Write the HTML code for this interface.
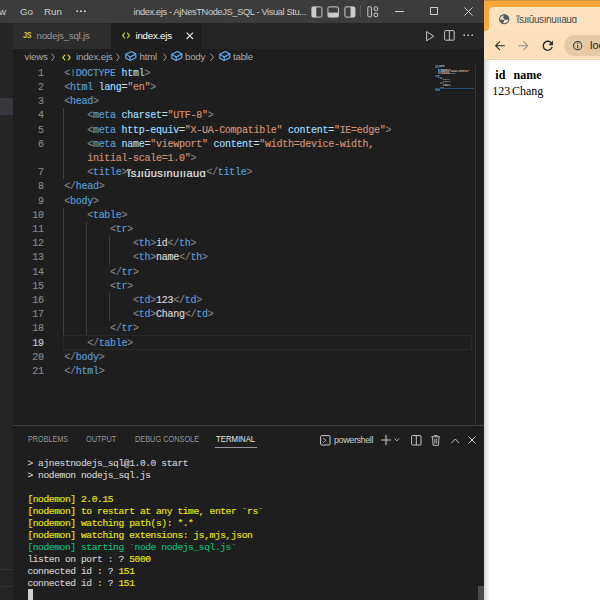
<!DOCTYPE html>
<html><head><meta charset="utf-8">
<style>
*{margin:0;padding:0;box-sizing:border-box}
html,body{width:600px;height:600px;overflow:hidden;background:#1e1e1e;font-family:"Liberation Sans",sans-serif;position:relative}
.a{position:absolute}
svg{position:absolute;overflow:visible}
#title{left:0;top:0;width:484px;height:22.5px;background:#3c3c3c;color:#cccccc;font-size:9.75px}
#title span{position:absolute;top:0.8px;line-height:22px;white-space:pre}
#side{left:0;top:22.5px;width:12.5px;height:577.5px;background:#252526}
#tabs{left:12.5px;top:22.5px;width:471.5px;height:26px;background:#252526}
.tab{top:0;height:26px;font-size:9.75px;line-height:26.5px;color:#969696;white-space:pre}
.tab span{position:absolute;top:0}
#crumbs{left:12.5px;top:48.5px;width:471.5px;height:17px;font-size:9.75px;line-height:15.6px;color:#a9a9a9;white-space:pre}
#crumbs span{position:absolute;top:0}
.mono{font-family:"Liberation Mono",monospace}
#code{left:0;top:65.6px;width:472px;height:360px;font-size:10px;letter-spacing:-0.265px;-webkit-text-stroke:0.18px currentColor}
.row{position:absolute;height:14.2px;line-height:14.2px;white-space:pre;padding-top:1.2px}
.ln{left:12px;width:32px;text-align:right;color:#858585;letter-spacing:-0.1px}
.t{left:64.2px;color:#d4d4d4}
.b{color:#808080}.n{color:#569cd6}.at{color:#9cdcfe}.s{color:#ce9178}.w{color:#d4d4d4}
.guide{position:absolute;width:1px;background:#404040}
#panel{left:12.5px;top:424.5px;width:471.5px;height:175.5px;background:#1e1e1e;border-top:1px solid #3f3f3f}
.ptab{position:absolute;top:8.7px;font-size:8.6px;line-height:10px;color:#969696;white-space:pre;transform-origin:left center}
#term{left:27.4px;top:458px;font-size:9.6px;letter-spacing:-0.4px;color:#cccccc;-webkit-text-stroke:0.15px currentColor}
.tr{position:absolute;left:0;height:12px;line-height:12px;white-space:pre}
.y{color:#e5e510}.g{color:#0dbc79}.d{color:#cccccc}
#browser{left:484px;top:0;width:116px;height:600px;background:#ffffff;overflow:hidden}
</style></head><body>
<div id="title" class="a">
  <span style="left:-1px">w</span>
  <span style="left:20px">Go</span>
  <span style="left:44px">Run</span>
  <svg style="left:75.5px;top:10px" width="10" height="3" viewBox="0 0 10 3"><circle cx="1.2" cy="1.3" r="1" fill="#d0d0d0"/><circle cx="5" cy="1.3" r="1" fill="#d0d0d0"/><circle cx="8.8" cy="1.3" r="1" fill="#d0d0d0"/></svg>
  <span style="left:133.5px;font-size:9.3px;letter-spacing:-0.38px">index.ejs - AjNesTNodeJS_SQL - Visual Stu...</span>
  <svg style="left:310.5px;top:5.5px" width="12" height="12" viewBox="0 0 12 12"><rect x="0.9" y="0.9" width="10" height="10.2" rx="1.2" fill="none" stroke="#cccccc" stroke-width="1"/><rect x="1" y="1" width="4.3" height="10" fill="#cccccc"/></svg><svg style="left:326.5px;top:5.5px" width="12" height="12" viewBox="0 0 12 12"><rect x="0.9" y="0.9" width="10.5" height="10.2" rx="1.2" fill="none" stroke="#cccccc" stroke-width="1"/><rect x="1" y="6.6" width="10.4" height="4.4" fill="#cccccc"/></svg><svg style="left:343.5px;top:5.5px" width="12" height="12" viewBox="0 0 12 12"><rect x="0.9" y="0.9" width="10" height="10.2" rx="1.2" fill="none" stroke="#cccccc" stroke-width="1"/><rect x="6.6" y="1" width="4.3" height="10" fill="#cccccc"/></svg><div class="a" style="left:360px;top:5px;width:1px;height:12px;background:#5a5a5a"></div><svg style="left:367px;top:5.5px" width="12" height="12" viewBox="0 0 12 12"><rect x="0.8" y="0.8" width="3.6" height="10" rx="0.8" fill="none" stroke="#cccccc" stroke-width="1"/><rect x="7.2" y="0.8" width="3.4" height="3.6" rx="0.8" fill="none" stroke="#cccccc" stroke-width="1"/><rect x="7.2" y="7" width="3.4" height="3.6" rx="0.8" fill="none" stroke="#cccccc" stroke-width="1"/></svg><div class="a" style="left:395px;top:10.6px;width:9px;height:1px;background:#cccccc"></div><div class="a" style="left:429.5px;top:7px;width:8.2px;height:8px;border:1px solid #cccccc;border-radius:0.5px"></div><svg style="left:463.5px;top:6.8px" width="9" height="9" viewBox="0 0 9 9"><path d="M0.5 0.5L8.5 8.5M8.5 0.5L0.5 8.5" stroke="#cccccc" stroke-width="1"/></svg>
</div>
<div id="side" class="a">
  <div class="a" style="left:0;top:75.5px;width:12.5px;height:16.5px;background:#37373d"></div>
  <div class="a" style="left:0;top:546.5px;width:12.5px;height:1px;background:#333335"></div>
  <div class="a" style="left:0;top:563px;width:12.5px;height:1px;background:#333335"></div>
</div>
<div id="tabs" class="a">
  <div class="a tab" style="left:0;width:98px;background:#2d2d2d"><span style="color:#cbcb41;font-weight:bold;font-size:8.8px;left:10.3px;top:-0.5px;letter-spacing:-0.4px;display:inline-block;transform:scaleX(0.82);transform-origin:left">JS</span><span style="left:24px;letter-spacing:-0.26px">nodejs_sql.js</span></div>
  <div class="a tab" style="left:98px;width:90px;background:#1e1e1e;color:#ffffff"><svg style="left:11.3px;top:9.8px" width="9" height="7" viewBox="0 0 9 7"><path d="M2.9 0.6L0.7 3.5L2.9 6.4M5.2 0.6L7.4 3.5L5.2 6.4" fill="none" stroke="#cbcb41" stroke-width="1.2"/></svg><span style="left:25px;letter-spacing:-0.24px">index.ejs</span><svg style="left:75.6px;top:9.4px" width="8" height="8" viewBox="0 0 8 8"><path d="M0.6 0.6L7 7M7 0.6L0.6 7" stroke="#dcdcdc" stroke-width="1.2"/></svg></div>
  <svg style="left:413px;top:8px" width="9" height="11" viewBox="0 0 9 11"><path d="M0.6 0.6L7.8 5.2L0.6 9.8Z" fill="none" stroke="#c5c5c5" stroke-width="1" stroke-linejoin="round"/></svg><svg style="left:431.5px;top:7px" width="11" height="11" viewBox="0 0 11 11"><rect x="0.6" y="0.6" width="9.6" height="9.6" rx="0.8" fill="none" stroke="#c5c5c5" stroke-width="1"/><path d="M5.4 0.6V10.2" stroke="#c5c5c5" stroke-width="1"/></svg><svg style="left:450.5px;top:11px" width="11" height="3" viewBox="0 0 11 3"><circle cx="1.2" cy="1.2" r="0.85" fill="#c5c5c5"/><circle cx="5.2" cy="1.2" r="0.85" fill="#c5c5c5"/><circle cx="9.2" cy="1.2" r="0.85" fill="#c5c5c5"/></svg>
</div>
<div id="crumbs" class="a">
  <span style="left:12px;letter-spacing:-0.25px">views</span>
  <svg style="left:38.7px;top:4.2px" width="4" height="9" viewBox="0 0 4 9"><path d="M0.5 0.5L3.3 4.2L0.5 7.9" fill="none" stroke="#a9a9a9" stroke-width="0.9"/></svg><svg style="left:49.8px;top:5.2px" width="9" height="7" viewBox="0 0 9 7"><path d="M3.2 0.6L0.8 3.5L3.2 6.4M5.8 0.6L8.2 3.5L5.8 6.4" fill="none" stroke="#cbcb41" stroke-width="1.2"/></svg><span style="left:63.5px;letter-spacing:-0.22px">index.ejs</span><svg style="left:103.8px;top:4.2px" width="4" height="9" viewBox="0 0 4 9"><path d="M0.5 0.5L3.3 4.2L0.5 7.9" fill="none" stroke="#a9a9a9" stroke-width="0.9"/></svg><svg style="left:112.3px;top:2.5px" width="12" height="11" viewBox="0 0 12 11"><path d="M0.8 3.3L6.5 0.5L10.8 3L10.8 6.7L5.2 9.4L0.8 7.3Z" fill="none" stroke="#62aef5" stroke-width="1.15" stroke-linejoin="round"/><path d="M0.8 3.3L5.2 6L10.8 3M5.2 6V9.4" fill="none" stroke="#62aef5" stroke-width="1.15"/></svg><span style="left:127.0px;letter-spacing:-0.25px">html</span><svg style="left:150.5px;top:4.2px" width="4" height="9" viewBox="0 0 4 9"><path d="M0.5 0.5L3.3 4.2L0.5 7.9" fill="none" stroke="#a9a9a9" stroke-width="0.9"/></svg><svg style="left:158.1px;top:2.5px" width="12" height="11" viewBox="0 0 12 11"><path d="M0.8 3.3L6.5 0.5L10.8 3L10.8 6.7L5.2 9.4L0.8 7.3Z" fill="none" stroke="#62aef5" stroke-width="1.15" stroke-linejoin="round"/><path d="M0.8 3.3L5.2 6L10.8 3M5.2 6V9.4" fill="none" stroke="#62aef5" stroke-width="1.15"/></svg><span style="left:172.5px;letter-spacing:-0.25px">body</span><svg style="left:197.9px;top:4.2px" width="4" height="9" viewBox="0 0 4 9"><path d="M0.5 0.5L3.3 4.2L0.5 7.9" fill="none" stroke="#a9a9a9" stroke-width="0.9"/></svg><svg style="left:206.1px;top:2.5px" width="12" height="11" viewBox="0 0 12 11"><path d="M0.8 3.3L6.5 0.5L10.8 3L10.8 6.7L5.2 9.4L0.8 7.3Z" fill="none" stroke="#62aef5" stroke-width="1.15" stroke-linejoin="round"/><path d="M0.8 3.3L5.2 6L10.8 3M5.2 6V9.4" fill="none" stroke="#62aef5" stroke-width="1.15"/></svg><span style="left:220.5px;letter-spacing:-0.25px">table</span>
</div>
<div id="code" class="a mono">
<div class="a" style="left:63.2px;top:269.80px;width:409px;height:14.20px;border:1px solid #282828"></div>
<div class="guide" style="left:63.2px;top:42.60px;height:71.00px;background:#404040"></div>
<div class="guide" style="left:63.2px;top:142.00px;height:127.80px;background:#404040"></div>
<div class="guide" style="left:86.1px;top:156.20px;height:113.60px;background:#404040"></div>
<div class="guide" style="left:109.1px;top:170.40px;height:28.40px;background:#404040"></div>
<div class="guide" style="left:109.1px;top:227.20px;height:28.40px;background:#404040"></div>
<div class="row ln" style="top:0.00px;color:#858585">1</div>
<div class="row t" style="top:0.00px"><span class="b">&lt;!</span><span class="n">DOCTYPE</span><span class="w"> </span><span class="at">html</span><span class="b">&gt;</span></div>
<div class="row ln" style="top:14.20px;color:#858585">2</div>
<div class="row t" style="top:14.20px"><span class="b">&lt;</span><span class="n">html</span><span class="w"> </span><span class="at">lang</span><span class="w">=</span><span class="s">"en"</span><span class="b">&gt;</span></div>
<div class="row ln" style="top:28.40px;color:#858585">3</div>
<div class="row t" style="top:28.40px"><span class="b">&lt;</span><span class="n">head</span><span class="b">&gt;</span></div>
<div class="row ln" style="top:42.60px;color:#858585">4</div>
<div class="row t" style="top:42.60px"><span class="w">    </span><span class="b">&lt;</span><span class="n">meta</span><span class="w"> </span><span class="at">charset</span><span class="w">=</span><span class="s">"UTF-8"</span><span class="b">&gt;</span></div>
<div class="row ln" style="top:56.80px;color:#858585">5</div>
<div class="row t" style="top:56.80px"><span class="w">    </span><span class="b">&lt;</span><span class="n">meta</span><span class="w"> </span><span class="at">http-equiv</span><span class="w">=</span><span class="s">"X-UA-Compatible"</span><span class="w"> </span><span class="at">content</span><span class="w">=</span><span class="s">"IE=edge"</span><span class="b">&gt;</span></div>
<div class="row ln" style="top:71.00px;color:#858585">6</div>
<div class="row t" style="top:71.00px"><span class="w">    </span><span class="b">&lt;</span><span class="n">meta</span><span class="w"> </span><span class="at">name</span><span class="w">=</span><span class="s">"viewport"</span><span class="w"> </span><span class="at">content</span><span class="w">=</span><span class="s">"width=device-width,</span></div>
<div class="row t" style="top:85.20px"><span class="w">    </span><span class="s">initial-scale=1.0"</span><span class="b">&gt;</span></div>
<div class="row ln" style="top:99.40px;color:#858585">7</div>
<div class="row t" style="top:99.40px"><span class="w">    </span><span class="b">&lt;</span><span class="n">title</span><span class="b">&gt;</span><span style="display:inline-block;width:79px;font-family:'Liberation Sans',sans-serif;font-size:11px;letter-spacing:0.4px;color:#e8e8e8;vertical-align:top;overflow:hidden">ĩsɹıūusınuııauɑ</span><span class="b">&lt;/</span><span class="n">title</span><span class="b">&gt;</span></div>
<div class="row ln" style="top:113.60px;color:#858585">8</div>
<div class="row t" style="top:113.60px"><span class="b">&lt;/</span><span class="n">head</span><span class="b">&gt;</span></div>
<div class="row ln" style="top:127.80px;color:#858585">9</div>
<div class="row t" style="top:127.80px"><span class="b">&lt;</span><span class="n">body</span><span class="b">&gt;</span></div>
<div class="row ln" style="top:142.00px;color:#858585">10</div>
<div class="row t" style="top:142.00px"><span class="w">    </span><span class="b">&lt;</span><span class="n">table</span><span class="b">&gt;</span></div>
<div class="row ln" style="top:156.20px;color:#858585">11</div>
<div class="row t" style="top:156.20px"><span class="w">        </span><span class="b">&lt;</span><span class="n">tr</span><span class="b">&gt;</span></div>
<div class="row ln" style="top:170.40px;color:#858585">12</div>
<div class="row t" style="top:170.40px"><span class="w">            </span><span class="b">&lt;</span><span class="n">th</span><span class="b">&gt;</span><span class="w">id</span><span class="b">&lt;/</span><span class="n">th</span><span class="b">&gt;</span></div>
<div class="row ln" style="top:184.60px;color:#858585">13</div>
<div class="row t" style="top:184.60px"><span class="w">            </span><span class="b">&lt;</span><span class="n">th</span><span class="b">&gt;</span><span class="w">name</span><span class="b">&lt;/</span><span class="n">th</span><span class="b">&gt;</span></div>
<div class="row ln" style="top:198.80px;color:#858585">14</div>
<div class="row t" style="top:198.80px"><span class="w">        </span><span class="b">&lt;/</span><span class="n">tr</span><span class="b">&gt;</span></div>
<div class="row ln" style="top:213.00px;color:#858585">15</div>
<div class="row t" style="top:213.00px"><span class="w">        </span><span class="b">&lt;</span><span class="n">tr</span><span class="b">&gt;</span></div>
<div class="row ln" style="top:227.20px;color:#858585">16</div>
<div class="row t" style="top:227.20px"><span class="w">            </span><span class="b">&lt;</span><span class="n">td</span><span class="b">&gt;</span><span class="w">123</span><span class="b">&lt;/</span><span class="n">td</span><span class="b">&gt;</span></div>
<div class="row ln" style="top:241.40px;color:#858585">17</div>
<div class="row t" style="top:241.40px"><span class="w">            </span><span class="b">&lt;</span><span class="n">td</span><span class="b">&gt;</span><span class="w">Chang</span><span class="b">&lt;/</span><span class="n">td</span><span class="b">&gt;</span></div>
<div class="row ln" style="top:255.60px;color:#858585">18</div>
<div class="row t" style="top:255.60px"><span class="w">        </span><span class="b">&lt;/</span><span class="n">tr</span><span class="b">&gt;</span></div>
<div class="row ln" style="top:269.80px;color:#c6c6c6">19</div>
<div class="row t" style="top:269.80px"><span class="w">    </span><span class="b">&lt;/</span><span class="n">table</span><span class="b">&gt;</span></div>
<div class="row ln" style="top:284.00px;color:#858585">20</div>
<div class="row t" style="top:284.00px"><span class="b">&lt;/</span><span class="n">body</span><span class="b">&gt;</span></div>
<div class="row ln" style="top:298.20px;color:#858585">21</div>
<div class="row t" style="top:298.20px"><span class="b">&lt;/</span><span class="n">html</span><span class="b">&gt;</span></div>
</div>
<div class="a" style="left:435.40px;top:65.00px;width:1.20px;height:1.1px;background:#808080;opacity:0.55"></div><div class="a" style="left:436.60px;top:65.00px;width:4.20px;height:1.1px;background:#569cd6;opacity:0.55"></div><div class="a" style="left:441.40px;top:65.00px;width:2.40px;height:1.1px;background:#9cdcfe;opacity:0.55"></div><div class="a" style="left:443.80px;top:65.00px;width:0.60px;height:1.1px;background:#808080;opacity:0.55"></div><div class="a" style="left:435.40px;top:66.20px;width:0.60px;height:1.1px;background:#808080;opacity:0.55"></div><div class="a" style="left:436.00px;top:66.20px;width:2.40px;height:1.1px;background:#569cd6;opacity:0.55"></div><div class="a" style="left:439.00px;top:66.20px;width:2.40px;height:1.1px;background:#9cdcfe;opacity:0.55"></div><div class="a" style="left:441.40px;top:66.20px;width:0.60px;height:1.1px;background:#d4d4d4;opacity:0.55"></div><div class="a" style="left:442.00px;top:66.20px;width:2.40px;height:1.1px;background:#ce9178;opacity:0.55"></div><div class="a" style="left:444.40px;top:66.20px;width:0.60px;height:1.1px;background:#808080;opacity:0.55"></div><div class="a" style="left:435.40px;top:67.40px;width:0.60px;height:1.1px;background:#808080;opacity:0.55"></div><div class="a" style="left:436.00px;top:67.40px;width:2.40px;height:1.1px;background:#569cd6;opacity:0.55"></div><div class="a" style="left:438.40px;top:67.40px;width:0.60px;height:1.1px;background:#808080;opacity:0.55"></div><div class="a" style="left:437.80px;top:68.60px;width:0.60px;height:1.1px;background:#808080;opacity:0.55"></div><div class="a" style="left:438.40px;top:68.60px;width:2.40px;height:1.1px;background:#569cd6;opacity:0.55"></div><div class="a" style="left:441.40px;top:68.60px;width:4.20px;height:1.1px;background:#9cdcfe;opacity:0.55"></div><div class="a" style="left:445.60px;top:68.60px;width:0.60px;height:1.1px;background:#d4d4d4;opacity:0.55"></div><div class="a" style="left:446.20px;top:68.60px;width:4.20px;height:1.1px;background:#ce9178;opacity:0.55"></div><div class="a" style="left:450.40px;top:68.60px;width:0.60px;height:1.1px;background:#808080;opacity:0.55"></div><div class="a" style="left:437.80px;top:69.80px;width:0.60px;height:1.1px;background:#808080;opacity:0.55"></div><div class="a" style="left:438.40px;top:69.80px;width:2.40px;height:1.1px;background:#569cd6;opacity:0.55"></div><div class="a" style="left:441.40px;top:69.80px;width:6.00px;height:1.1px;background:#9cdcfe;opacity:0.55"></div><div class="a" style="left:447.40px;top:69.80px;width:0.60px;height:1.1px;background:#d4d4d4;opacity:0.55"></div><div class="a" style="left:448.00px;top:69.80px;width:10.20px;height:1.1px;background:#ce9178;opacity:0.55"></div><div class="a" style="left:458.80px;top:69.80px;width:4.20px;height:1.1px;background:#9cdcfe;opacity:0.55"></div><div class="a" style="left:463.00px;top:69.80px;width:0.60px;height:1.1px;background:#d4d4d4;opacity:0.55"></div><div class="a" style="left:463.60px;top:69.80px;width:5.40px;height:1.1px;background:#ce9178;opacity:0.55"></div><div class="a" style="left:469.00px;top:69.80px;width:0.60px;height:1.1px;background:#808080;opacity:0.55"></div><div class="a" style="left:437.80px;top:71.00px;width:0.60px;height:1.1px;background:#808080;opacity:0.55"></div><div class="a" style="left:438.40px;top:71.00px;width:2.40px;height:1.1px;background:#569cd6;opacity:0.55"></div><div class="a" style="left:441.40px;top:71.00px;width:2.40px;height:1.1px;background:#9cdcfe;opacity:0.55"></div><div class="a" style="left:443.80px;top:71.00px;width:0.60px;height:1.1px;background:#d4d4d4;opacity:0.55"></div><div class="a" style="left:444.40px;top:71.00px;width:6.00px;height:1.1px;background:#ce9178;opacity:0.55"></div><div class="a" style="left:451.00px;top:71.00px;width:4.20px;height:1.1px;background:#9cdcfe;opacity:0.55"></div><div class="a" style="left:455.20px;top:71.00px;width:0.60px;height:1.1px;background:#d4d4d4;opacity:0.55"></div><div class="a" style="left:455.80px;top:71.00px;width:12.00px;height:1.1px;background:#ce9178;opacity:0.55"></div><div class="a" style="left:437.80px;top:72.20px;width:10.80px;height:1.1px;background:#ce9178;opacity:0.55"></div><div class="a" style="left:448.60px;top:72.20px;width:0.60px;height:1.1px;background:#808080;opacity:0.55"></div><div class="a" style="left:437.80px;top:73.40px;width:0.60px;height:1.1px;background:#808080;opacity:0.55"></div><div class="a" style="left:438.40px;top:73.40px;width:3.00px;height:1.1px;background:#569cd6;opacity:0.55"></div><div class="a" style="left:441.40px;top:73.40px;width:0.60px;height:1.1px;background:#808080;opacity:0.55"></div><div class="a" style="left:442.00px;top:73.40px;width:8.40px;height:1.1px;background:#d4d4d4;opacity:0.55"></div><div class="a" style="left:450.40px;top:73.40px;width:1.20px;height:1.1px;background:#808080;opacity:0.55"></div><div class="a" style="left:451.60px;top:73.40px;width:3.00px;height:1.1px;background:#569cd6;opacity:0.55"></div><div class="a" style="left:454.60px;top:73.40px;width:0.60px;height:1.1px;background:#808080;opacity:0.55"></div><div class="a" style="left:435.40px;top:74.60px;width:1.20px;height:1.1px;background:#808080;opacity:0.55"></div><div class="a" style="left:436.60px;top:74.60px;width:2.40px;height:1.1px;background:#569cd6;opacity:0.55"></div><div class="a" style="left:439.00px;top:74.60px;width:0.60px;height:1.1px;background:#808080;opacity:0.55"></div><div class="a" style="left:435.40px;top:75.80px;width:0.60px;height:1.1px;background:#808080;opacity:0.55"></div><div class="a" style="left:436.00px;top:75.80px;width:2.40px;height:1.1px;background:#569cd6;opacity:0.55"></div><div class="a" style="left:438.40px;top:75.80px;width:0.60px;height:1.1px;background:#808080;opacity:0.55"></div><div class="a" style="left:437.80px;top:77.00px;width:0.60px;height:1.1px;background:#808080;opacity:0.55"></div><div class="a" style="left:438.40px;top:77.00px;width:3.00px;height:1.1px;background:#569cd6;opacity:0.55"></div><div class="a" style="left:441.40px;top:77.00px;width:0.60px;height:1.1px;background:#808080;opacity:0.55"></div><div class="a" style="left:440.20px;top:78.20px;width:0.60px;height:1.1px;background:#808080;opacity:0.55"></div><div class="a" style="left:440.80px;top:78.20px;width:1.20px;height:1.1px;background:#569cd6;opacity:0.55"></div><div class="a" style="left:442.00px;top:78.20px;width:0.60px;height:1.1px;background:#808080;opacity:0.55"></div><div class="a" style="left:442.60px;top:79.40px;width:0.60px;height:1.1px;background:#808080;opacity:0.55"></div><div class="a" style="left:443.20px;top:79.40px;width:1.20px;height:1.1px;background:#569cd6;opacity:0.55"></div><div class="a" style="left:444.40px;top:79.40px;width:0.60px;height:1.1px;background:#808080;opacity:0.55"></div><div class="a" style="left:445.00px;top:79.40px;width:1.20px;height:1.1px;background:#d4d4d4;opacity:0.55"></div><div class="a" style="left:446.20px;top:79.40px;width:1.20px;height:1.1px;background:#808080;opacity:0.55"></div><div class="a" style="left:447.40px;top:79.40px;width:1.20px;height:1.1px;background:#569cd6;opacity:0.55"></div><div class="a" style="left:448.60px;top:79.40px;width:0.60px;height:1.1px;background:#808080;opacity:0.55"></div><div class="a" style="left:442.60px;top:80.60px;width:0.60px;height:1.1px;background:#808080;opacity:0.55"></div><div class="a" style="left:443.20px;top:80.60px;width:1.20px;height:1.1px;background:#569cd6;opacity:0.55"></div><div class="a" style="left:444.40px;top:80.60px;width:0.60px;height:1.1px;background:#808080;opacity:0.55"></div><div class="a" style="left:445.00px;top:80.60px;width:2.40px;height:1.1px;background:#d4d4d4;opacity:0.55"></div><div class="a" style="left:447.40px;top:80.60px;width:1.20px;height:1.1px;background:#808080;opacity:0.55"></div><div class="a" style="left:448.60px;top:80.60px;width:1.20px;height:1.1px;background:#569cd6;opacity:0.55"></div><div class="a" style="left:449.80px;top:80.60px;width:0.60px;height:1.1px;background:#808080;opacity:0.55"></div><div class="a" style="left:440.20px;top:81.80px;width:1.20px;height:1.1px;background:#808080;opacity:0.55"></div><div class="a" style="left:441.40px;top:81.80px;width:1.20px;height:1.1px;background:#569cd6;opacity:0.55"></div><div class="a" style="left:442.60px;top:81.80px;width:0.60px;height:1.1px;background:#808080;opacity:0.55"></div><div class="a" style="left:440.20px;top:83.00px;width:0.60px;height:1.1px;background:#808080;opacity:0.55"></div><div class="a" style="left:440.80px;top:83.00px;width:1.20px;height:1.1px;background:#569cd6;opacity:0.55"></div><div class="a" style="left:442.00px;top:83.00px;width:0.60px;height:1.1px;background:#808080;opacity:0.55"></div><div class="a" style="left:442.60px;top:84.20px;width:0.60px;height:1.1px;background:#808080;opacity:0.55"></div><div class="a" style="left:443.20px;top:84.20px;width:1.20px;height:1.1px;background:#569cd6;opacity:0.55"></div><div class="a" style="left:444.40px;top:84.20px;width:0.60px;height:1.1px;background:#808080;opacity:0.55"></div><div class="a" style="left:445.00px;top:84.20px;width:1.80px;height:1.1px;background:#d4d4d4;opacity:0.55"></div><div class="a" style="left:446.80px;top:84.20px;width:1.20px;height:1.1px;background:#808080;opacity:0.55"></div><div class="a" style="left:448.00px;top:84.20px;width:1.20px;height:1.1px;background:#569cd6;opacity:0.55"></div><div class="a" style="left:449.20px;top:84.20px;width:0.60px;height:1.1px;background:#808080;opacity:0.55"></div><div class="a" style="left:442.60px;top:85.40px;width:0.60px;height:1.1px;background:#808080;opacity:0.55"></div><div class="a" style="left:443.20px;top:85.40px;width:1.20px;height:1.1px;background:#569cd6;opacity:0.55"></div><div class="a" style="left:444.40px;top:85.40px;width:0.60px;height:1.1px;background:#808080;opacity:0.55"></div><div class="a" style="left:445.00px;top:85.40px;width:3.00px;height:1.1px;background:#d4d4d4;opacity:0.55"></div><div class="a" style="left:448.00px;top:85.40px;width:1.20px;height:1.1px;background:#808080;opacity:0.55"></div><div class="a" style="left:449.20px;top:85.40px;width:1.20px;height:1.1px;background:#569cd6;opacity:0.55"></div><div class="a" style="left:450.40px;top:85.40px;width:0.60px;height:1.1px;background:#808080;opacity:0.55"></div><div class="a" style="left:440.20px;top:86.60px;width:1.20px;height:1.1px;background:#808080;opacity:0.55"></div><div class="a" style="left:441.40px;top:86.60px;width:1.20px;height:1.1px;background:#569cd6;opacity:0.55"></div><div class="a" style="left:442.60px;top:86.60px;width:0.60px;height:1.1px;background:#808080;opacity:0.55"></div><div class="a" style="left:437.80px;top:87.80px;width:1.20px;height:1.1px;background:#808080;opacity:0.55"></div><div class="a" style="left:439.00px;top:87.80px;width:3.00px;height:1.1px;background:#569cd6;opacity:0.55"></div><div class="a" style="left:442.00px;top:87.80px;width:0.60px;height:1.1px;background:#808080;opacity:0.55"></div><div class="a" style="left:435.40px;top:89.00px;width:1.20px;height:1.1px;background:#808080;opacity:0.55"></div><div class="a" style="left:436.60px;top:89.00px;width:2.40px;height:1.1px;background:#569cd6;opacity:0.55"></div><div class="a" style="left:439.00px;top:89.00px;width:0.60px;height:1.1px;background:#808080;opacity:0.55"></div><div class="a" style="left:435.40px;top:90.20px;width:1.20px;height:1.1px;background:#808080;opacity:0.55"></div><div class="a" style="left:436.60px;top:90.20px;width:2.40px;height:1.1px;background:#569cd6;opacity:0.55"></div><div class="a" style="left:439.00px;top:90.20px;width:0.60px;height:1.1px;background:#808080;opacity:0.55"></div><div class="a" style="left:435.4px;top:87.9px;width:39px;height:1.2px;background:#264f78"></div><div class="a" style="left:475px;top:65px;width:1px;height:359.5px;background:#333333"></div>
<div id="panel" class="a">
  <span class="ptab" style="left:15px;transform:scaleX(0.84)">PROBLEMS</span>
  <span class="ptab" style="left:73.5px;transform:scaleX(0.86)">OUTPUT</span>
  <span class="ptab" style="left:122px;transform:scaleX(0.855)">DEBUG CONSOLE</span>
  <span class="ptab" style="left:203.5px;color:#e7e7e7;transform:scaleX(0.9)">TERMINAL</span>
  <div class="a" style="left:202.5px;top:21.6px;width:41.5px;height:1.2px;background:#959595"></div>
  <svg style="left:307.0px;top:9.5px" width="11" height="11" viewBox="0 0 11 11"><rect x="0.6" y="0.6" width="9.4" height="9.4" rx="1" fill="none" stroke="#c5c5c5" stroke-width="1"/><path d="M3.4 3L5.6 5.3L3.4 7.6" fill="none" stroke="#c5c5c5" stroke-width="1"/></svg><span class="a" style="left:321.5px;top:9px;font-size:9px;line-height:11px;color:#cccccc;letter-spacing:-0.4px">powershell</span><svg style="left:368.5px;top:9.5px" width="11" height="11" viewBox="0 0 11 11"><path d="M5 0V10M0 5H10" stroke="#c5c5c5" stroke-width="1.1"/></svg><svg style="left:381.0px;top:12.5px" width="6" height="4" viewBox="0 0 6 4"><path d="M0.5 0.5L2.8 2.8L5.1 0.5" fill="none" stroke="#c5c5c5" stroke-width="0.9"/></svg><svg style="left:398.5px;top:9.5px" width="11" height="11" viewBox="0 0 11 11"><rect x="0.6" y="0.6" width="9.4" height="9.4" rx="0.8" fill="none" stroke="#c5c5c5" stroke-width="1"/><path d="M5.3 0.6V10" stroke="#c5c5c5" stroke-width="1"/></svg><svg style="left:418.5px;top:9.2px" width="10" height="11" viewBox="0 0 10 11"><path d="M0.3 1.8H9.2M3.2 1.8V0.5H6.3V1.8M1.5 1.8L2 10.3H7.5L8 1.8M3.8 3.8V8.6M5.7 3.8V8.6" fill="none" stroke="#c5c5c5" stroke-width="0.9"/></svg><svg style="left:438.5px;top:12px" width="9" height="6" viewBox="0 0 9 6"><path d="M0.5 5L4.3 1L8.1 5" fill="none" stroke="#c5c5c5" stroke-width="1"/></svg><svg style="left:455.0px;top:10.5px" width="8" height="8" viewBox="0 0 8 8"><path d="M0.5 0.5L7.5 7.5M7.5 0.5L0.5 7.5" stroke="#c5c5c5" stroke-width="1"/></svg>
</div>
<div id="term" class="a mono">
<div class="tr" style="top:0px"><span class="d">&gt; ajnestnodejs_sql@1.0.0 start</span></div>
<div class="tr" style="top:12px"><span class="d">&gt; nodemon nodejs_sql.js</span></div>
<div class="tr" style="top:24px"></div>
<div class="tr" style="top:36px"><span class="y">[nodemon] 2.0.15</span></div>
<div class="tr" style="top:48px"><span class="y">[nodemon] to restart at any time, enter `rs`</span></div>
<div class="tr" style="top:60px"><span class="y">[nodemon] watching path(s): *.*</span></div>
<div class="tr" style="top:72px"><span class="y">[nodemon] watching extensions: js,mjs,json</span></div>
<div class="tr" style="top:84px"><span class="g">[nodemon] starting `node nodejs_sql.js`</span></div>
<div class="tr" style="top:96px"><span class="d">listen on port : ? </span><span class="y">5000</span></div>
<div class="tr" style="top:108px"><span class="d">connected id : ? </span><span class="y">151</span></div>
<div class="tr" style="top:120px"><span class="d">connected id : ? </span><span class="y">151</span></div>
</div>
<div class="a" style="left:27.5px;top:589px;width:5.8px;height:11px;background:#d0d0d0"></div>
<div class="a" style="left:477.5px;top:586px;width:6.5px;height:14px;background:#4a4a4a"></div>
<div id="browser" class="a">
<div class="a" style="left:0;top:0;width:116px;height:31px;background:#f9a63a"></div><div class="a" style="left:0;top:0;width:116px;height:1px;background:#c99246"></div><div class="a" style="left:0;top:30px;width:116px;height:29.5px;background:#fde0bb"></div><div class="a" style="left:0;top:25px;width:6px;height:6px;background:#fde2bf"></div><div class="a" style="left:0;top:1px;width:5px;height:29.5px;background:#f9a63a;border-bottom-right-radius:4px"></div><div class="a" style="left:5px;top:6.7px;width:120px;height:24px;background:#fde2bf;border-radius:4.5px 4.5px 0 0"></div><svg style="left:14.7px;top:14.2px" width="11" height="11" viewBox="0 0 11 11"><circle cx="5.2" cy="5.2" r="5.15" fill="#535c69"/><path d="M1.1 5.6C0.9 3.6 2.2 1.8 4.1 1.2C5 1.7 4.6 2.6 4.1 3.2C3.7 3.7 4.5 4.3 5.2 4.5C5.6 5 4.8 5.9 4 5.9C3.2 5.9 1.8 5.9 1.1 5.6Z" fill="#fde2bf"/><path d="M4.6 9.3C6.8 9.6 9 8.1 9.3 5.8C8.7 5.3 7.7 5.6 7.1 6.1C6.5 6.6 5.9 5.7 5.3 5.6C4.9 6 5.3 6.9 4.9 7.5C4.5 8.1 4 8.8 4.6 9.3Z" fill="#fde2bf"/></svg><span class="a" style="left:32.5px;top:13.8px;font-size:10px;line-height:11px;color:#4a4a4a;letter-spacing:-0.4px;white-space:pre">ĩsɹıūusınuııauɑ</span><svg style="left:8.1px;top:37.6px" width="15.4" height="15.4" viewBox="0 0 24 24"><path d="M20 11.2H7.6l5.4-5.4L11.9 4.6 4.5 12l7.4 7.4 1.1-1.1-5.4-5.5H20z" fill="#222222"/></svg><svg style="left:32.4px;top:37.6px" width="15.4" height="15.4" viewBox="0 0 24 24"><path d="M12.1 4.6l-1.1 1.1 5.4 5.5H4v1.6h12.4l-5.4 5.5 1.1 1.1 7.4-7.4z" fill="#958d83"/></svg><svg style="left:55.8px;top:37.9px" width="15.6" height="15.6" viewBox="0 0 24 24"><path d="M17.65 6.35C16.2 4.9 14.21 4 12 4c-4.42 0-7.99 3.58-7.99 8s3.57 8 7.99 8c3.73 0 6.84-2.55 7.73-6h-2.08c-.82 2.33-3.04 4-5.65 4-3.31 0-6-2.69-6-6s2.69-6 6-6c1.66 0 3.14.69 4.22 1.78L13 11h7V4l-2.35 2.35z" fill="#262626"/></svg><div class="a" style="left:80px;top:35px;width:60px;height:21px;background:#e6caa5;border-radius:10.5px"></div><svg style="left:88.8px;top:41px" width="10" height="10" viewBox="0 0 10 10"><circle cx="4.7" cy="4.7" r="4.1" fill="none" stroke="#3c3c3c" stroke-width="1.1"/><path d="M4.7 3.9V7.4" stroke="#3c3c3c" stroke-width="1.1"/><circle cx="4.7" cy="2.6" r="0.6" fill="#3c3c3c"/></svg><span class="a" style="left:106px;top:39px;font-size:11px;line-height:13px;color:#1f1f1f;white-space:pre">localhost</span><div class="a" style="left:0;top:59px;width:116px;height:1px;background:#ead3b0"></div><div class="a" style="left:0;top:60px;width:6px;height:540px;background:linear-gradient(to right,#d4d4d4,#ffffff)"></div><span class="a" style="left:11.3px;top:69px;font-family:'Liberation Serif',serif;font-weight:bold;font-size:12px;line-height:12px;color:#000;white-space:pre">id</span><span class="a" style="left:29.6px;top:69px;font-family:'Liberation Serif',serif;font-weight:bold;font-size:12px;line-height:12px;color:#000;white-space:pre">name</span><span class="a" style="left:8.2px;top:85px;font-family:'Liberation Serif',serif;font-size:12px;line-height:12px;color:#000;white-space:pre">123</span><span class="a" style="left:28px;top:85px;font-family:'Liberation Serif',serif;font-size:12px;line-height:12px;color:#000;white-space:pre">Chang</span>
</div>
</body></html>
